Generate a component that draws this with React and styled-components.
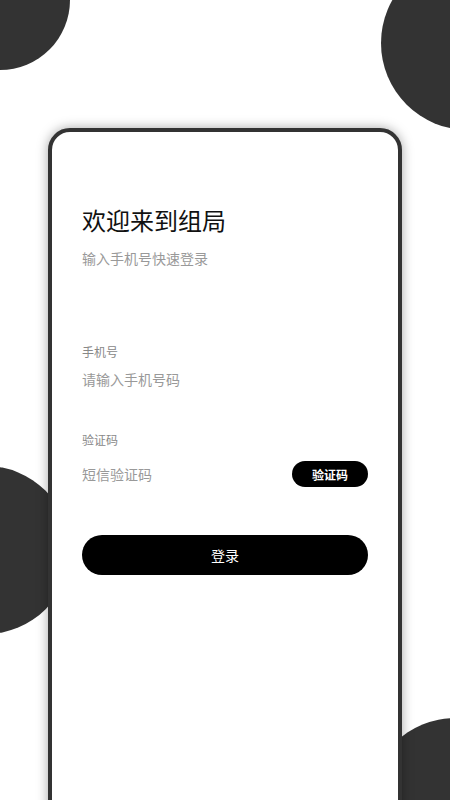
import React from "react";
import styled, { createGlobalStyle } from "styled-components";

const GlobalStyle = createGlobalStyle`
  html, body {
    margin: 0;
    padding: 0;
    background: #fff;
  }
  body {
    font-family: "Noto Sans CJK SC", "Noto Sans", sans-serif;
  }
`;

const Page = styled.div`
  position: relative;
  width: 450px;
  height: 800px;
  overflow: hidden;
  background: #fff;
  padding-top: 128px;
  box-sizing: border-box;
`;

// decorative blobs behind the card
const Blob = styled.div`
  position: absolute;
  border-radius: 50%;
  background: #333;
  width: ${(p) => p.size * 2}px;
  height: ${(p) => p.size * 2}px;
  left: ${(p) => p.cx - p.size}px;
  top: ${(p) => p.cy - p.size}px;
`;

const Card = styled.div`
  position: relative;
  z-index: 1;
  margin: 0 auto;
  width: 354px;
  height: 720px;
  box-sizing: border-box;
  background: #fff;
  border: 4px solid #333;
  border-radius: 22px;
  box-shadow: 0 0 12px rgba(0, 0, 0, 0.35);
  padding: 71px 30px 0;
  display: flex;
  flex-direction: column;
`;

const Title = styled.h1`
  margin: 0;
  font-size: 24px;
  line-height: 34px;
  font-weight: 400;
  color: #111;
`;

const Subtitle = styled.p`
  margin: 11px 0 0;
  font-size: 14px;
  line-height: 20px;
  color: #999;
`;

const Field = styled.div`
  display: flex;
  flex-direction: column;
  margin-top: ${(p) => p.gap}px;
`;

const Label = styled.span`
  font-size: 12px;
  line-height: 18px;
  color: #888;
`;

const Row = styled.div`
  display: flex;
  align-items: center;
  justify-content: space-between;
  margin-top: ${(p) => p.gap}px;
  height: ${(p) => p.h}px;
`;

const Placeholder = styled.span`
  font-size: 14px;
  line-height: 20px;
  color: #999;
`;

const CodeButton = styled.button`
  width: 76px;
  height: 26px;
  border: none;
  border-radius: 13px;
  background: #000;
  color: #fff;
  font-family: inherit;
  font-size: 12px;
  font-weight: 700;
  padding: 0;
  cursor: pointer;
`;

const LoginButton = styled.button`
  margin-top: 48px;
  width: 100%;
  height: 40px;
  border: none;
  border-radius: 20px;
  background: #000;
  color: #fff;
  font-family: inherit;
  font-size: 14px;
  padding: 0;
  cursor: pointer;
`;

const App = () => {
  return (
    <>
      <GlobalStyle />
      <Page>
        <Blob size={70} cx={0} cy={0} />
        <Blob size={87} cx={468} cy={43} />
        <Blob size={84} cx={-14} cy={550} />
        <Blob size={85} cx={455} cy={803} />
        <Card>
          <Title>欢迎来到组局</Title>
          <Subtitle>输入手机号快速登录</Subtitle>
          <Field gap={75}>
            <Label>手机号</Label>
            <Row gap={8} h={20}>
              <Placeholder>请输入手机号码</Placeholder>
            </Row>
          </Field>
          <Field gap={42}>
            <Label>验证码</Label>
            <Row gap={12} h={26}>
              <Placeholder>短信验证码</Placeholder>
              <CodeButton>验证码</CodeButton>
            </Row>
          </Field>
          <LoginButton>登录</LoginButton>
        </Card>
      </Page>
    </>
  );
};

export default App;
